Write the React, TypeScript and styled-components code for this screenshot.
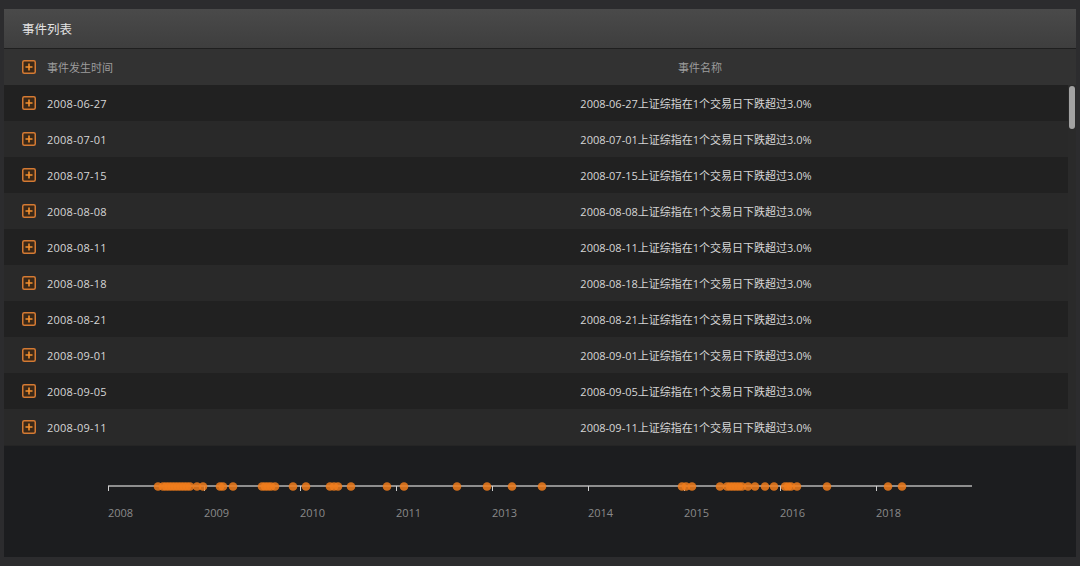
import React from "react";
import styled, { createGlobalStyle } from "styled-components";

const GlobalStyle = createGlobalStyle`
  html, body {
    margin: 0;
    padding: 0;
    background: #2c2c2e;
  }
  body {
    font-family: "Open Sans", "Noto Sans CJK SC", sans-serif;
    overflow: hidden;
  }
`;

const Page = styled.div`
  padding: 9px 4px 9px 4px;
`;

const Panel = styled.div`
  display: flex;
  flex-direction: column;
  background: #1c1d1f;
`;

const PanelHeader = styled.div`
  height: 39px;
  display: flex;
  align-items: center;
  padding-left: 18px;
  background: linear-gradient(#4a4a4a, #3e3e3e);
  border-bottom: 1px solid #1f1f1f;
  color: #e2e2e2;
  font-size: 12.5px;
`;

const HeadRow = styled.div`
  display: grid;
  grid-template-columns: 320px 1fr;
  height: 36px;
  background: #323232;
  align-items: center;
  color: #9c9c9c;
  font-size: 11px;
`;

const Body = styled.div`
  display: flex;
  height: 360px;
`;

const Rows = styled.div`
  flex: 1;
  display: flex;
  flex-direction: column;
`;

const ScrollTrack = styled.div`
  width: 8px;
  background: #2a2a2a;
  display: flex;
  flex-direction: column;
  align-items: center;
  padding-top: 1px;
`;

const ScrollThumb = styled.div`
  width: 6px;
  height: 43px;
  border-radius: 3px;
  background: #a2a2a2;
`;

const Row = styled.div<{ $alt: boolean }>`
  display: grid;
  grid-template-columns: 320px 1fr;
  height: 36px;
  align-items: center;
  background: ${(p) => (p.$alt ? "#292929" : "#212121")};
  color: #d6d6d6;
  font-size: 11px;
`;

const DateCell = styled.div`
  display: flex;
  align-items: center;
  gap: 11px;
  padding-left: 18px;
`;

const DateText = styled.span`
  letter-spacing: 0.25px;
`;

const NameCell = styled.div`
  text-align: center;
`;

const Timeline = styled.div`
  height: 112px;
  background: #1c1d1f;
  border-top: 1px solid #252525;
  box-sizing: border-box;
`;

const PlusIcon = () => (
  <svg width="14" height="14" viewBox="0 0 14 14">
    <rect x="0.75" y="0.75" width="12.5" height="12.5" rx="1.5" fill="#3a2818" stroke="#d47a33" strokeWidth="1.5" />
    <path d="M7 3.5v7M3.5 7h7" stroke="#f4902f" strokeWidth="1.6" />
  </svg>
);

const dates = [
  "2008-06-27",
  "2008-07-01",
  "2008-07-15",
  "2008-08-08",
  "2008-08-11",
  "2008-08-18",
  "2008-08-21",
  "2008-09-01",
  "2008-09-05",
  "2008-09-11",
];

const dots = [
  158, 163, 166, 169, 172, 175, 178, 181, 184, 187, 190, 197, 203, 220, 223, 233,
  262, 265, 268, 271, 275, 293, 306, 330, 334, 338, 351, 387, 404, 457, 487, 512, 542,
  682, 686, 692, 720, 727, 730, 733, 736, 739, 742, 748, 755, 765, 774, 785, 788, 791,
  797, 827, 888, 902,
];

const years = ["2008", "2009", "2010", "2011", "2013", "2014", "2015", "2016", "2018"];

const TimelineChart = () => {
  const ox = -4;
  const y = 40;
  return (
    <svg width="100%" height="111" viewBox="0 0 1072 111">
      <line x1={108 + ox} x2={972 + ox} y1={y} y2={y} stroke="#b5b5b5" strokeWidth="1.5" />
      {years.map((yr, i) => {
        const x = 108 + ox + i * 96;
        return (
          <g key={yr}>
            <line x1={x + 0.5} x2={x + 0.5} y1={y} y2={y + 5} stroke="#cfcfcf" strokeWidth="1" />
            <text
              x={x}
              y={y + 31}
              fill="#8a8a8a"
              fontSize="11"
              fontFamily="Open Sans, sans-serif"
            >
              {yr}
            </text>
          </g>
        );
      })}
      {dots.map((d, i) => (
        <circle key={i} cx={d + ox} cy={y + 0.5} r="4.3" fill="#f07c1c" fillOpacity="0.85" />
      ))}
    </svg>
  );
};

export default function App() {
  return (
    <>
      <GlobalStyle />
      <Page>
        <Panel>
          <PanelHeader>事件列表</PanelHeader>
          <HeadRow>
            <DateCell>
              <PlusIcon />
              <span>事件发生时间</span>
            </DateCell>
            <NameCell>事件名称</NameCell>
          </HeadRow>
          <Body>
            <Rows>
              {dates.map((d, i) => (
                <Row key={d} $alt={i % 2 === 1}>
                  <DateCell>
                    <PlusIcon />
                    <DateText>{d}</DateText>
                  </DateCell>
                  <NameCell>{d}上证综指在1个交易日下跌超过3.0%</NameCell>
                </Row>
              ))}
            </Rows>
            <ScrollTrack>
              <ScrollThumb />
            </ScrollTrack>
          </Body>
          <Timeline>
            <TimelineChart />
          </Timeline>
        </Panel>
      </Page>
    </>
  );
}
